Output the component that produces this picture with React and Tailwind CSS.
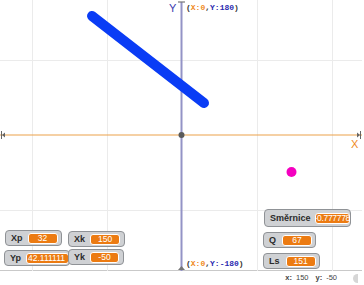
import React from 'react'

const Monitor = ({ label, value, className, pill }) => {
    return (
        <div className={`absolute flex items-center rounded-[4px] border border-[#8f9296] bg-[#cfd1d4] ${className}`}>
            <span className="text-[9px] font-bold leading-none text-[#2b2b2b]">{label}</span>
            <span className={`flex h-[11px] items-center justify-center overflow-hidden whitespace-nowrap rounded-[3px] border border-white bg-[#ec7b12] text-[8.5px] leading-none text-white ${pill}`}>
                {value}
            </span>
        </div>
    )
}

export default function App() {
    return (
        <div className="relative h-[285px] w-[364px] overflow-hidden bg-white font-['Liberation_Sans',Arial,sans-serif]">
            <div className="relative h-[271px] w-[362px] border-b border-[#c9c9c9]">
                <svg className="absolute left-0 top-0" width="362" height="271" viewBox="0 0 362 271">
                    {[32, 107, 257, 332].map((x) => (
                        <line key={x} x1={x + 0.5} y1="0" x2={x + 0.5} y2="271" stroke="#ebebeb" strokeWidth="1" />
                    ))}
                    {[60, 210].map((y) => (
                        <line key={y} x1="0" y1={y + 0.5} x2="362" y2={y + 0.5} stroke="#ebebeb" strokeWidth="1" />
                    ))}
                    <line x1="0" y1="135" x2="362" y2="135" stroke="#eca24a" strokeWidth="1.2" />
                    <line x1="181.5" y1="2" x2="181.5" y2="271" stroke="#9393c6" strokeWidth="2" />
                    <path d="M178 2 L185 2" stroke="#777" strokeWidth="1.2" />
                    <path d="M178 270 L181.5 266 L185 270 Z" fill="#777" />
                    <path d="M1.5 131 L1.5 139" stroke="#666" strokeWidth="1" />
                    <path d="M2 135 L5 132.5 L5 137.5 Z" fill="#666" />
                    <path d="M360.5 131 L360.5 139" stroke="#666" strokeWidth="1" />
                    <path d="M360 135 L357 132.5 L357 137.5 Z" fill="#666" />
                    <circle cx="181.5" cy="135" r="3" fill="#5a5a5a" />
                    <line x1="92" y1="16" x2="204" y2="103" stroke="#0a3cf5" strokeWidth="10" strokeLinecap="round" />
                    <circle cx="291.5" cy="172" r="5" fill="#f400c0" />
                </svg>

                <span className="absolute left-[169px] top-[3px] text-[11px] leading-none text-[#3b3bb0]">Y</span>
                <span className="absolute left-[351px] top-[139px] text-[11px] leading-none text-[#f08a1c]">X</span>

                <div className="absolute left-[186px] top-[4px] font-['Liberation_Mono',monospace] text-[8px] font-bold leading-none text-[#333]">
                    (<span className="text-[#f08a1c]">X:0</span>,<span className="text-[#2a2ab0]">Y:180</span>)
                </div>
                <div className="absolute left-[186px] top-[260px] font-['Liberation_Mono',monospace] text-[8px] font-bold leading-none text-[#333]">
                    (<span className="text-[#f08a1c]">X:0</span>,<span className="text-[#2a2ab0]">Y:-180</span>)
                </div>

                <Monitor label="Xp" value="32" className="left-[5px] top-[230px] h-[16px] w-[57px] gap-[5px] pl-[5px]" pill="w-[30px]" />
                <Monitor label="Xk" value="150" className="left-[68px] top-[231px] h-[16px] w-[57px] gap-[5px] pl-[5px]" pill="w-[30px]" />
                <Monitor label="Yp" value="42.111111" className="left-[4px] top-[250px] h-[16px] w-[66px] gap-[5px] pl-[5px]" pill="w-[46px] justify-start pl-[1px]" />
                <Monitor label="Yk" value="-50" className="left-[68px] top-[249px] h-[16px] w-[56px] gap-[5px] pl-[5px]" pill="w-[29px]" />
                <Monitor label="Směrnice" value="-0.777778" className="left-[264px] top-[209px] h-[18px] w-[87px] gap-[4px] pl-[5px]" pill="w-[36px] text-[7.5px] tracking-[-0.3px]" />
                <Monitor label="Q" value="67" className="left-[263px] top-[232px] h-[16px] w-[53px] gap-[6px] pl-[5px]" pill="w-[30px]" />
                <Monitor label="Ls" value="151" className="left-[263px] top-[253px] h-[16px] w-[57px] gap-[6px] pl-[5px]" pill="w-[30px]" />
            </div>

            <div className="flex h-[14px] items-center justify-end pr-[6px] text-[7.5px] text-[#444]">
                <span className="mr-[4px] font-bold">x:</span>
                <span className="mr-[7px]">150</span>
                <span className="mr-[4px] font-bold">y:</span>
                <span className="mr-[16px]">-50</span>
                <span className="h-[9px] w-[5px] rounded-l-full bg-[#d6d6d6]" />
            </div>
        </div>
    )
}
